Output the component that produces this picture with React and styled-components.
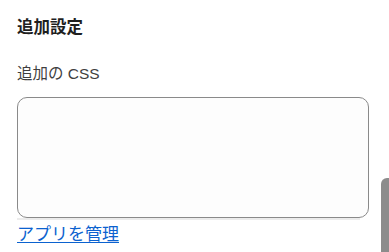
import React from 'react';
import styled, { createGlobalStyle } from 'styled-components';

const Global = createGlobalStyle`
    html, body {
        margin: 0;
        padding: 0;
        background: #ffffff;
        overflow: hidden;
    }
    body {
        font-family: "Liberation Sans", "Noto Sans CJK JP", sans-serif;
    }
`;

const Panel = styled.div`
    position: relative;
    width: 389px;
    height: 252px;
    box-sizing: border-box;
    padding: 15px 20px 0 17px;
`;

const Heading = styled.h3`
    margin: 0;
    font-size: 16.5px;
    line-height: 24px;
    font-weight: 700;
    color: #1f1f1f;
`;

const Label = styled.label`
    display: block;
    margin-top: 24px;
    font-size: 15.5px;
    line-height: 22px;
    color: #3f3f3f;
`;

const Field = styled.textarea`
    display: block;
    box-sizing: border-box;
    width: 352px;
    height: 121px;
    margin-top: 12px;
    border: 1px solid #8a8a8a;
    border-radius: 10px;
    background: #fdfdfd;
    resize: none;
    outline: none;
    font-family: inherit;
`;

const Rule = styled.div`
    width: 343px;
    height: 2px;
    background: #ececec;
`;

const Manage = styled.a`
    display: inline-block;
    margin-top: 3px;
    font-size: 17px;
    line-height: 24px;
    color: #0b62cf;
    text-decoration: underline;
    text-underline-offset: 2px;
`;

const Scroll = styled.div`
    position: absolute;
    right: 0;
    top: 178px;
    bottom: 0;
    width: 8px;
    background: #8c8c8c;
    border-top-left-radius: 6px;
`;

export default () => (
    <>
        <Global />
        <Panel>
            <Heading>追加設定</Heading>
            <Label>追加の CSS</Label>
            <Field />
            <Rule />
            <Manage href="#">アプリを管理</Manage>
            <Scroll />
        </Panel>
    </>
);
